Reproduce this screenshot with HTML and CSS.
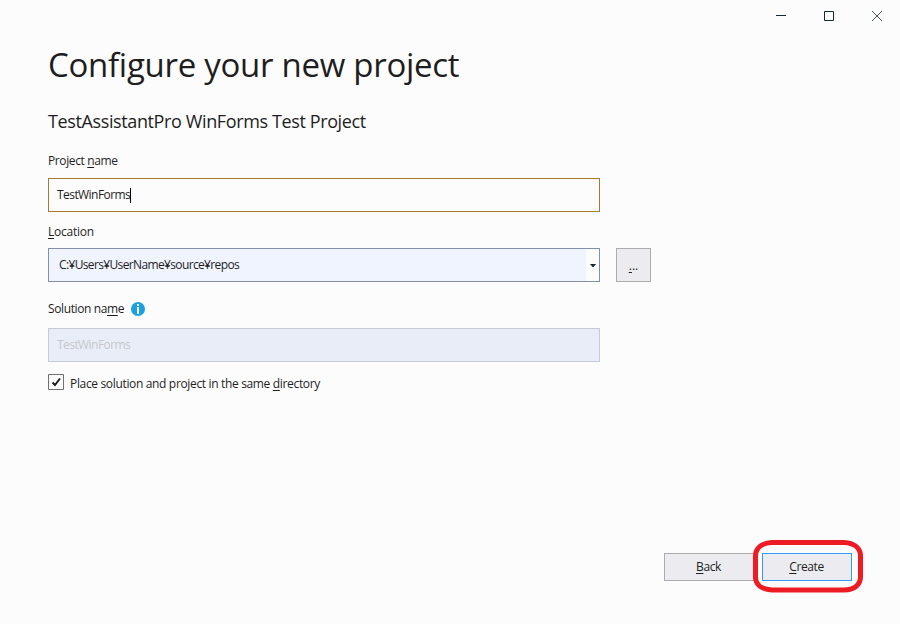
FILE: index.html
```
<!DOCTYPE html>
<html lang="en">
<head>
<meta charset="utf-8">
<title>Configure your new project</title>
<link rel="stylesheet" href="styles.css">
</head>
<body>
<main class="window">
  <header class="titlebar">
    <svg class="caption" viewBox="0 0 48 32"><path d="M19 15.5h10"/></svg>
    <svg class="caption" viewBox="0 0 48 32"><path d="M19.5 11.5h9v9h-9z"/></svg>
    <svg class="caption close" viewBox="0 0 48 32"><path d="M19 11l10 10M29 11L19 21"/></svg>
  </header>
  <section class="content">
    <h1><span>Configure your new project</span></h1>
    <h2><span>TestAssistantPro WinForms Test Project</span></h2>
    <label class="label project"><span>Project <u>n</u>ame</span></label>
    <div class="field active"><span class="name">TestWinForms</span><i class="caret"></i></div>
    <label class="label location"><span><u>L</u>ocation</span></label>
    <div class="row">
      <div class="field combo"><span class="path">C:¥Users¥UserName¥source¥repos</span>
        <div class="drop"><svg width="6" height="3" viewBox="0 0 6 3"><path d="M0 0h6L3.5 3h-1z"/></svg></div>
      </div>
      <button class="button browse"><u>.</u>..</button>
    </div>
    <label class="label solution"><span>Solution na<u>m</u>e</span>
      <svg class="info" viewBox="0 0 14 14"><circle cx="7" cy="7" r="7"/><path d="M6 2h2v2H6zM6 5h2v7H6z"/></svg>
    </label>
    <div class="field disabled"><span class="name">TestWinForms</span></div>
    <label class="check"><svg class="box" viewBox="0 0 16 16"><path class="frame" d="M.5.5h15v15H.5z"/><path class="tick" d="M4.500 8.500l2.500 2.500L12 4.500"/></svg><span>Place solution and project in the same <u>d</u>irectory</span></label>
  </section>
  <footer class="actions">
    <button class="button back"><span><u>B</u>ack</span></button>
    <div class="create-wrap">
      <button class="button create"><span><u>C</u>reate</span></button>
      <svg class="mark" viewBox="0 0 110 53"><path d="M19 2.500H91C101 3 107.500 8 107.500 16V37C107.500 45 101 50 91 50H19C9 49.500 2.500 45 2.500 37V16C2.500 8 9 3 19 2.500z"/></svg>
    </div>
  </footer>
</main>
</body>
</html>
```
FILE: styles.css
```
* { box-sizing: border-box; }
body { margin: 0; background: #fcfcfc; color: #1e1e1e; font: 12px/16px "Open Sans", "Noto Sans", sans-serif; }
.window { width: 900px; height: 624px; display: flex; flex-direction: column; overflow: hidden; }
.titlebar { height: 32px; display: flex; justify-content: flex-end; margin-right: -1px; flex: none; }
.caption { width: 48px; height: 32px; fill: none; stroke: #17243b; stroke-width: 1; }
.close { stroke: #465062; }
.content { padding-left: 48px; flex: 1; }
h1, h2 { margin: 0; font-weight: 400; white-space: nowrap; }
h1 { font-size: 33px; line-height: 48px; height: 48px; margin-top: 9px; letter-spacing: -.28px; }
h2 { font-size: 18px; line-height: 24px; height: 24px; margin-top: 20px; letter-spacing: -.38px; }
u { text-decoration: underline; text-decoration-thickness: 1px; text-underline-offset: 2px; text-decoration-skip-ink: none; }
.label { display: flex; align-items: center; height: 16px; letter-spacing: -.38px; }
.project { margin: 20px 0 9px; }
.location { margin: 12px 0 8px; letter-spacing: -.25px; }
.solution { margin: 19px 0 11px; gap: 7px; }
.field { width: 552px; height: 34px; border: 1px solid #a9792b; display: flex; align-items: center; padding-left: 8px; }
.name { letter-spacing: -.56px; }
.caret { width: 1px; height: 15px; background: #000; }
.row { display: flex; gap: 16px; }
.combo { border-color: #838fa9; background: #f0f4fe; padding-left: 10px; justify-content: space-between; }
.path { letter-spacing: -.64px; }
.drop { width: 13px; height: 32px; background: #fcfcfc; display: flex; align-items: center; justify-content: center; }
.drop path { fill: #17243b; }
.disabled { border-color: #c6cad8; background: #e9edf7; color: #c6c8ce; }
.button { border: 1px solid #acacac; background: #ececf0; color: #1e1e1e; padding: 0; font: inherit; text-align: center; }
.browse { width: 35px; height: 34px; padding-top: 2px; }
.info { width: 14px; height: 14px; }
.info circle { fill: #1ba1e2; }
.info path { fill: #fff; }
.check { display: flex; align-items: center; height: 16px; margin-top: 12px; gap: 6px; letter-spacing: -.34px; }
.check span { padding-top: 4px; }
.box { width: 16px; height: 16px; }
.frame { fill: #fcfcfc; stroke: #717171; }
.tick { fill: none; stroke: #1e1e1e; stroke-width: 2; }
.actions { height: 71px; display: flex; justify-content: flex-end; gap: 8px; padding-right: 48px; flex: none; }
.back, .create { width: 90px; height: 28px; display: block; padding: 0 1px 0 0; letter-spacing: -.4px; }
.create { border-color: #3399ff; }
.create-wrap { position: relative; }
.mark { position: absolute; left: -9px; top: -13px; width: 110px; height: 53px; fill: none; stroke: #ed1c24; stroke-width: 5; pointer-events: none; }
```
